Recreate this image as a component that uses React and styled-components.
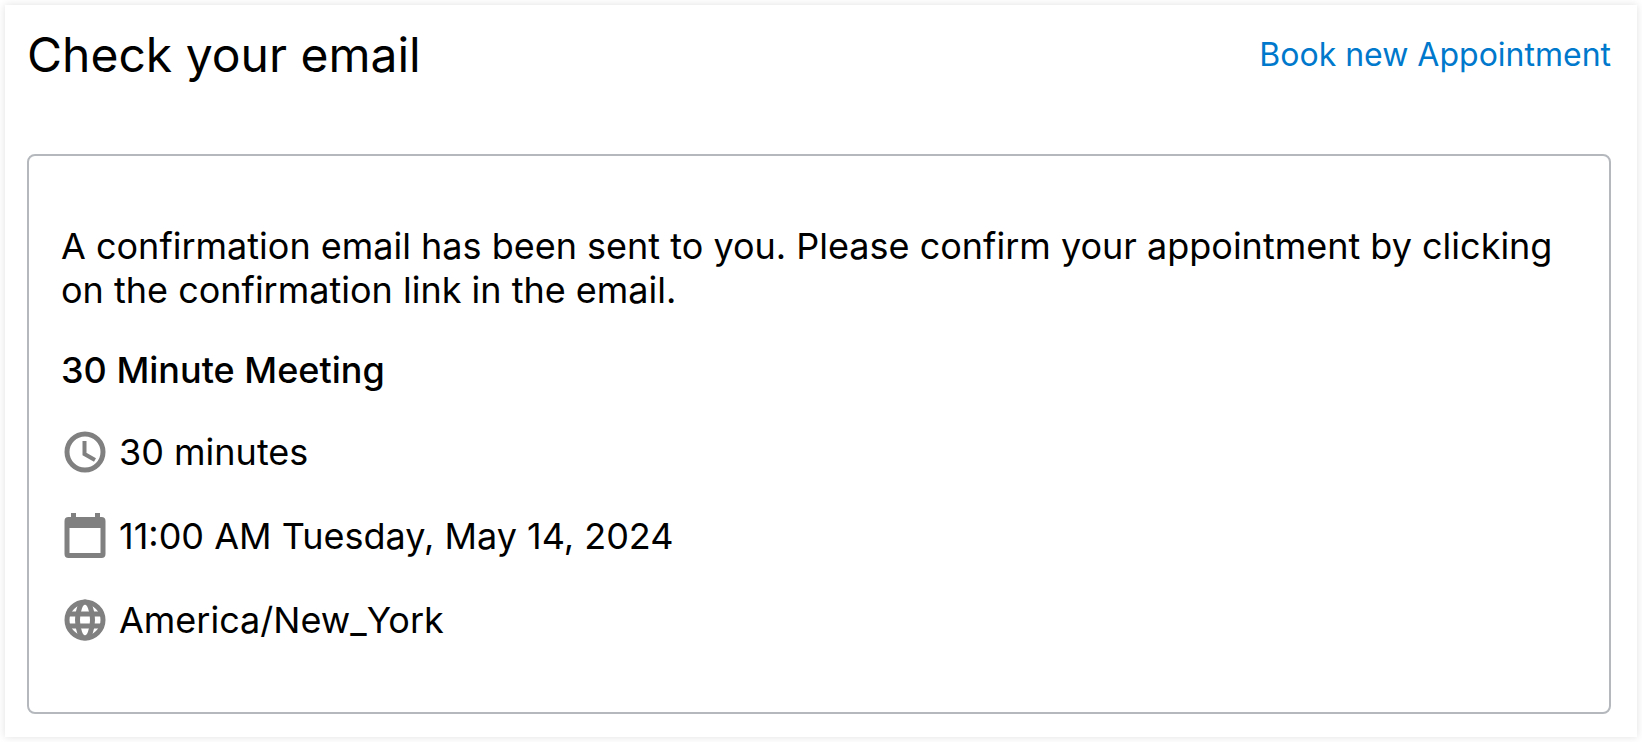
import React from "react";
import styled, { createGlobalStyle } from "styled-components";

const GlobalStyle = createGlobalStyle`
  * { box-sizing: border-box; }
  body { margin: 0; background: #fff; color: #000; font-family: Inter, "Liberation Sans", sans-serif; }
`;

const Page = styled.main`
  margin: 5px;
  padding: 21px 26px 23px 22px;
  background: #fff;
  box-shadow: 0 0 8px rgba(0, 0, 0, 0.12);
`;

const Header = styled.header`
  display: flex;
  justify-content: space-between;
  align-items: center;
  margin-bottom: 70px;
`;

const Title = styled.h1`
  margin: 0;
  font-size: 48px;
  line-height: 58px;
  font-weight: 400;
`;

const BookLink = styled.a`
  font-size: 32px;
  line-height: 40px;
  color: #0078cc;
  text-decoration: none;
`;

const Card = styled.section`
  padding: 68px 32px;
  border: 2px solid #b5b9bd;
  border-radius: 8px;
  font-size: 36px;
  line-height: 44px;
`;

const Message = styled.p`
  margin: 0 0 36px;
`;

const MeetingName = styled.h2`
  margin: 0 0 36px;
  font-size: 36px;
  line-height: 44px;
  font-weight: 500;
`;

const Details = styled.ul`
  display: flex;
  flex-direction: column;
  gap: 36px;
  margin: 0;
  padding: 0;
  list-style: none;
`;

const Detail = styled.li`
  display: flex;
  align-items: center;
  gap: 10px;
`;

const Icon = styled.svg`
  width: 48px;
  height: 48px;
  fill: none;
  stroke: #808080;
  stroke-width: 5;
`;

const ClockIcon = () => (
  <Icon viewBox="0 0 48 48" aria-hidden="true">
    <circle cx="24" cy="24" r="18" />
    <path d="M23.5 13v13l10.500 6" strokeWidth="4" />
  </Icon>
);

const CalendarIcon = () => (
  <Icon viewBox="0 0 48 48" aria-hidden="true">
    <path fill="#808080" stroke="none" fillRule="evenodd" d="M10 1h5v4h19V1h5v4h1.500a4 4 0 0 1 4 4v33a4 4 0 0 1-4 4h-33a4 4 0 0 1-4-4V9a4 4 0 0 1 4-4H10zM8.500 16v25h31V16z" />
  </Icon>
);

const GlobeIcon = () => (
  <Icon viewBox="0 0 48 48" aria-hidden="true">
    <circle cx="24" cy="24" r="18" />
    <ellipse cx="24" cy="24" rx="7.500" ry="18" />
    <path d="M7 18h34M7 30h34" />
  </Icon>
);

const details = [
  { text: "30 minutes", Glyph: ClockIcon },
  { text: "11:00 AM Tuesday, May 14, 2024", Glyph: CalendarIcon },
  { text: "America/New_York", Glyph: GlobeIcon },
];

export default function App() {
  return (
    <>
      <GlobalStyle />
      <Page>
        <Header>
          <Title>Check your email</Title>
          <BookLink href="#book">Book new Appointment</BookLink>
        </Header>
        <Card>
          <Message>
            A confirmation email has been sent to you. Please confirm your appointment by clicking on the confirmation link in the email.
          </Message>
          <MeetingName>30 Minute Meeting</MeetingName>
          <Details>
            {details.map(({ text, Glyph }) => (
              <Detail key={text}>
                <Glyph />
                {text}
              </Detail>
            ))}
          </Details>
        </Card>
      </Page>
    </>
  );
}
